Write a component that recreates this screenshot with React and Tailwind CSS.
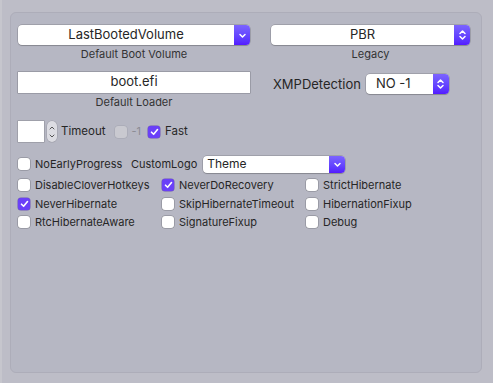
import React from 'react';

const font = { fontFamily: 'Inter, "Noto Sans", sans-serif' };

const Chevron = ({ double }) => (
  <svg width="9" height={double ? 12 : 7} viewBox={double ? '0 0 9 12' : '0 0 9 7'} fill="none" stroke="white" strokeWidth="1.5" strokeLinecap="round" strokeLinejoin="round">
    {double ? (
      <>
        <path d="M2 4.5 L4.5 2 L7 4.5" />
        <path d="M2 7.5 L4.5 10 L7 7.5" />
      </>
    ) : (
      <path d="M2 2.5 L4.5 5 L7 2.5" />
    )}
  </svg>
);

const Popup = ({ value, double, className, align = 'justify-center', text = 'text-[13px]' }) => (
  <div className={`flex items-stretch rounded-[4px] bg-white shadow-[0_0_0_0.5px_rgba(0,0,0,0.25),0_1px_1px_rgba(0,0,0,0.15)] overflow-hidden ${className}`}>
    <div className={`flex-1 flex items-center ${align} ${text} text-[#262626]`}>{value}</div>
    <div className="w-[16px] flex items-center justify-center bg-gradient-to-b from-[#7c63ff] to-[#5419ff]">
      <Chevron double={double} />
    </div>
  </div>
);

const Check = ({ checked, disabled }) => (
  <div
    className={`w-[12px] h-[12px] rounded-[3px] flex items-center justify-center ${
      checked
        ? 'bg-[#6a40f8] shadow-[0_0_0_0.5px_rgba(60,20,180,0.6)]'
        : disabled
        ? 'bg-[#c9c9d0] shadow-[0_0_0_0.5px_rgba(0,0,0,0.1)]'
        : 'bg-white shadow-[0_0_0_0.5px_rgba(0,0,0,0.3)]'
    }`}
  >
    {checked && (
      <svg width="9" height="8" viewBox="0 0 9 8" fill="none" stroke="white" strokeWidth="1.6" strokeLinecap="round" strokeLinejoin="round">
        <path d="M1.5 4.2 L3.6 6.3 L7.5 1.5" />
      </svg>
    )}
  </div>
);

const Box = ({ label, checked }) => (
  <div className="w-[144px] flex items-center gap-[5px]">
    <Check checked={checked} />
    <span className="text-[11px] text-[#262626]">{label}</span>
  </div>
);

export default function App() {
  return (
    <div className="w-[493px] h-[383px] bg-[#bdbdc7] flex" style={font}>
      <div className="w-[2px] h-full bg-[#c6c6cd]" />
      <div className="ml-[8px] mt-[12px] w-[472px] h-[361px] rounded-[6px] bg-[#b6b7c3] border border-[#adadb9] pl-[7px] pt-[12px]">
        {/* top popups */}
        <div className="flex gap-[21px]">
          <div className="w-[232px] flex flex-col items-center">
            <Popup value="LastBootedVolume" className="w-full h-[20px]" />
            <div className="mt-[1px] text-[11px] text-[#333]">Default Boot Volume</div>
          </div>
          <div className="w-[199px] flex flex-col items-center">
            <Popup value="PBR" double className="w-full h-[20px]" />
            <div className="mt-[1px] text-[11px] text-[#333]">Legacy</div>
          </div>
        </div>

        {/* loader row */}
        <div className="flex mt-[9px]">
          <div className="w-[232px] flex flex-col items-center">
            <div className="w-full h-[21px] bg-white shadow-[0_0_0_0.5px_rgba(0,0,0,0.3)] flex items-center justify-center text-[13px] text-[#262626]">boot.efi</div>
            <div className="mt-[1px] text-[11px] text-[#333]">Default Loader</div>
          </div>
          <div className="ml-[23px] mt-[2px] flex items-center h-[20px] gap-[5px]">
            <span className="text-[13px] text-[#262626] mt-[3px]">XMPDetection</span>
            <Popup value="NO -1" double align="justify-start pl-[10px]" className="w-[83px] h-[20px]" />
          </div>
        </div>

        {/* timeout row */}
        <div className="flex items-center mt-[11px] h-[21px]">
          <div className="w-[26px] h-[21px] bg-white shadow-[0_0_0_0.5px_rgba(0,0,0,0.25)]" />
          <div className="ml-[3px] w-[10px] h-[21px] rounded-full bg-[#dcdce2] shadow-[0_0_0_0.5px_rgba(0,0,0,0.15)] flex items-center justify-center">
            <svg width="6" height="14" viewBox="0 0 6 14" fill="none" stroke="#555" strokeWidth="1" strokeLinecap="round" strokeLinejoin="round">
              <path d="M1 4 L3 2 L5 4" />
              <path d="M1 10 L3 12 L5 10" />
            </svg>
          </div>
          <span className="ml-[4px] text-[11.5px] text-[#262626]">Timeout</span>
          <div className="ml-[10px]"><Check disabled /></div>
          <span className="ml-[4px] text-[11px] text-[#8c8c94]">-1</span>
          <div className="ml-[7px]"><Check checked /></div>
          <span className="ml-[5px] text-[11.5px] text-[#262626]">Fast</span>
        </div>

        {/* checkbox grid */}
        <div className="mt-[13px] flex flex-col">
          <div className="flex items-center h-[18px]">
            <div className="w-[113px] flex items-center gap-[5px]">
              <Check />
              <span className="text-[11px] text-[#262626]">NoEarlyProgress</span>
            </div>
            <span className="text-[11px] text-[#262626]">CustomLogo</span>
            <Popup value="Theme" align="justify-start pl-[4px]" text="text-[12px]" className="ml-[6px] w-[142px] h-[17px]" />
          </div>
          <div className="flex items-center h-[18px] mt-[3px]">
            <Box label="DisableCloverHotkeys" />
            <Box label="NeverDoRecovery" checked />
            <Box label="StrictHibernate" />
          </div>
          <div className="flex items-center h-[18px] mt-[1px]">
            <Box label="NeverHibernate" checked />
            <Box label="SkipHibernateTimeout" />
            <Box label="HibernationFixup" />
          </div>
          <div className="flex items-center h-[18px]">
            <Box label="RtcHibernateAware" />
            <Box label="SignatureFixup" />
            <Box label="Debug" />
          </div>
        </div>
      </div>
    </div>
  );
}
